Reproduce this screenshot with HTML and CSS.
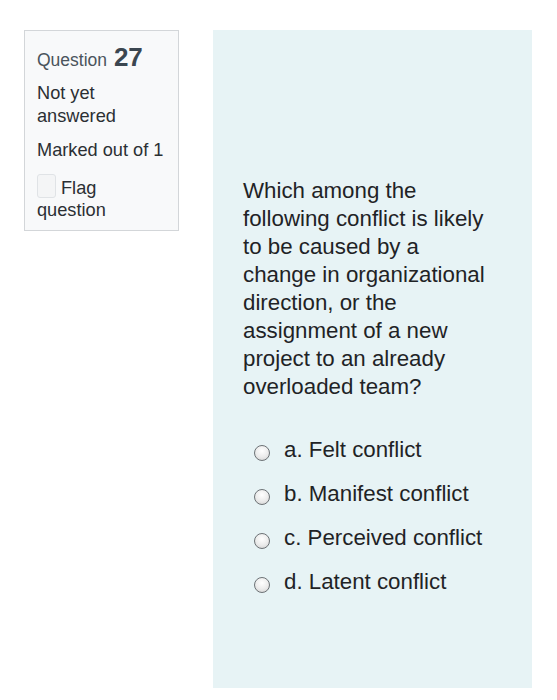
FILE: index.html
```html
<!DOCTYPE html>
<html>
<head>
<meta charset="utf-8">
<link rel="stylesheet" href="styles.css">
</head>
<body>
<div class="page">
  <div class="info">
    <h3 class="qno">Question <span class="num">27</span></h3>
    <div class="state">Not yet answered</div>
    <div class="grade">Marked out of 1</div>
    <div class="flag"><span class="flagbox"></span>Flag question</div>
  </div>
  <div class="content">
    <div class="qtext">Which among the following conflict is likely to be caused by a change in organizational direction, or the assignment of a new project to an already overloaded team?</div>
    <div class="answers">
      <div class="opt"><span class="radio"></span><span>a. Felt conflict</span></div>
      <div class="opt"><span class="radio"></span><span>b. Manifest conflict</span></div>
      <div class="opt"><span class="radio"></span><span>c. Perceived conflict</span></div>
      <div class="opt"><span class="radio"></span><span>d. Latent conflict</span></div>
    </div>
  </div>
</div>
</body>
</html>
```

FILE: styles.css
```css
html, body {
  margin: 0;
  padding: 0;
  background: #ffffff;
}
body {
  font-family: "Liberation Sans", Arial, sans-serif;
  color: #1f2326;
}
.page {
  display: flex;
  align-items: flex-start;
  gap: 34px;
  padding: 30px 0 0 24px;
}
.info {
  box-sizing: border-box;
  width: 155px;
  height: 201px;
  background: #f8f9fa;
  border: 1px solid #d3d6d9;
  padding: 11px 12px 0 12px;
  font-size: 18.2px;
  line-height: 22.5px;
  color: #2b2f33;
}
.qno {
  margin: 0 0 7px 0;
  font-size: 17.5px;
  font-weight: normal;
  line-height: 30px;
  color: #4a545c;
}
.num {
  font-size: 26px;
  font-weight: bold;
  color: #3b4650;
  margin-left: 2px;
}
.state {
  margin-bottom: 12px;
}
.grade {
  margin-bottom: 12px;
}
.flagbox {
  display: inline-block;
  box-sizing: border-box;
  width: 19px;
  height: 24px;
  border: 1px solid #e0e3e6;
  border-radius: 3px;
  background: #f4f5f6;
  vertical-align: -4px;
  margin-right: 5px;
}
.content {
  box-sizing: border-box;
  width: 319px;
  height: 658px;
  background: #e7f3f5;
  padding: 147px 30px 0 30px;
}
.qtext {
  font-size: 22.3px;
  line-height: 28px;
  width: 247px;
  color: #1f2326;
}
.answers {
  margin-top: 34px;
  display: flex;
  flex-direction: column;
  gap: 14px;
  padding-left: 11px;
}
.opt {
  display: flex;
  align-items: flex-start;
  gap: 14px;
  font-size: 22.3px;
  line-height: 30px;
  color: #1f2326;
}
.radio {
  flex: none;
  display: inline-block;
  box-sizing: border-box;
  width: 16px;
  height: 16px;
  border-radius: 50%;
  border: 1px solid #6d7276;
  background: radial-gradient(circle at 50% 35%, #ffffff 0%, #ebebeb 55%, #cdcdcd 100%);
  margin-top: 10px;
}
```
